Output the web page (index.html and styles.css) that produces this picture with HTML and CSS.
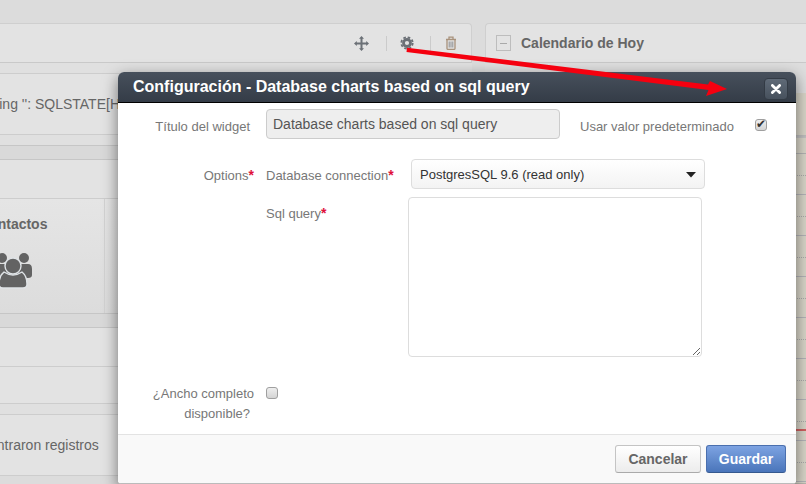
FILE: index.html
```html
<!DOCTYPE html>
<html lang="es">
<head>
<meta charset="utf-8">
<title>Configuración</title>
<link rel="stylesheet" href="styles.css">
</head>
<body>
<div class="page">
  <main class="col-left">
    <header class="widget-head">
      <span class="tool">
        <svg width="15" height="15" viewBox="0 0 15 15"><path class="ico" d="M7.5 0 10 2.8H8.5V6.5H12.2V5L15 7.5 12.2 10V8.5H8.5V12.2H10L7.5 15 5 12.2H6.5V8.5H2.8V10L0 7.5 2.8 5V6.5H6.5V2.8H5Z"/></svg>
      </span>
      <span class="tool sep gear-tool">
        <svg width="14" height="14" viewBox="0 0 14 14"><circle cx="7" cy="7" r="3.5" fill="none" stroke="#6b7076" stroke-width="2.8"/><circle cx="7" cy="7" r="5.7" fill="none" stroke="#6b7076" stroke-width="1.8" stroke-dasharray="2.6 1.88"/></svg>
      </span>
      <span class="tool sep">
        <svg width="12" height="14" viewBox="0 0 12 14"><path d="M1 3.5H11M4 3.2V1.2H8V3.2M2 3.5V12.4Q2 13.4 3 13.4H9Q10 13.4 10 12.4V3.5" fill="none" stroke="#a8927c" stroke-width="1.3"/><path d="M4.2 5.5V11.5M6 5.5V11.5M7.8 5.5V11.5" stroke="#8d8f92" stroke-width="1"/></svg>
      </span>
    </header>
    <div class="gap-10"></div>
    <section class="row row-alert"><span class="row-text alert-text">Error executing '': SQLSTATE[HY000]</span></section>
    <div class="gap-10"></div>
    <div class="band band-a"></div>
    <div class="row row-38"></div>
    <section class="cards">
      <article class="card">
        <h3 class="card-title">Contactos</h3>
        <svg class="users" width="48" height="38" viewBox="0 0 48 38">
          <circle cx="13" cy="7" r="5" class="fig"/><circle cx="35" cy="7" r="5" class="fig"/>
          <path class="fig" d="M5 18Q5 13 9 13H39Q43 13 43 18V24Q43 27 39 27H9Q5 27 5 24Z"/>
          <circle cx="24" cy="15" r="8" class="fig halo"/>
          <path class="fig halo" d="M15 21Q24 27 33 21 38 25 38 33 38 37 34 37H14Q10 37 10 33 10 25 15 21Z"/>
        </svg>
      </article>
      <div class="card-next"></div>
    </section>
    <div class="band band-b"></div>
    <div class="row row-40"></div>
    <div class="row row-37"></div>
    <div class="gap-10"></div>
    <section class="row row-empty"><span class="row-text empty-text">No se encontraron registros</span></section>
  </main>

  <aside class="col-right">
    <header class="cal-head">
      <span class="collapse"></span>
      <h2 class="cal-title">Calendario de Hoy</h2>
    </header>
    <div class="cal-top"></div>
    <div class="cal-grid">
      <div class="cal-allday"></div>
      <div class="slot"></div><div class="slot"></div><div class="slot"></div><div class="slot"></div>
      <div class="slot"></div><div class="slot"></div><div class="slot"></div><div class="slot"></div>
      <div class="now"></div>
    </div>
  </aside>
</div>

<div class="modal">
  <div class="modal-head">
    <h1 class="modal-title">Configuración - Database charts based on sql query</h1>
    <button class="close" type="button" aria-label="Cerrar">
      <svg width="10" height="10" viewBox="0 0 10 10"><path d="M1.4 1.4 8.6 8.6M8.6 1.4 1.4 8.6" stroke="#fff" stroke-width="2.8" stroke-linecap="round"/></svg>
    </button>
  </div>
  <form class="modal-body">
    <div class="form-row first">
      <label class="lab pad">Título del widget</label>
      <input class="text-input" type="text" value="Database charts based on sql query" readonly>
      <span class="default-label">Usar valor predeterminado</span>
      <input class="check check-default" type="checkbox" checked>
    </div>
    <div class="form-row options">
      <label class="lab">Options<b class="req">*</b></label>
      <div class="opt-grid">
        <label class="sub-lab">Database connection<b class="req">*</b></label>
        <div class="select-wrap">
          <select class="select"><option>PostgresSQL 9.6 (read only)</option></select>
          <svg class="caret" width="10" height="6" viewBox="0 0 10 6"><path d="M0 0H10L5 5.5Z" fill="#222"/></svg>
        </div>
        <label class="sub-lab sql">Sql query<b class="req">*</b></label>
        <textarea class="query"></textarea>
      </div>
    </div>
    <div class="form-row full">
      <label class="lab pad-wrap">¿Ancho completo<br><span class="pad">disponible?</span></label>
      <input class="check" type="checkbox">
    </div>
  </form>
  <div class="modal-foot">
    <button class="btn btn-cancel" type="button">Cancelar</button>
    <button class="btn btn-save" type="button">Guardar</button>
  </div>
</div>

<svg class="arrow" width="806" height="484" viewBox="0 0 806 484"><path d="M407 47.8 708 84.5 710 81 727 89 706 96 708.5 90 406.5 52Z" fill="#f5000f"/></svg>
</body>
</html>
```

FILE: styles.css
```css
* { box-sizing: border-box; }
html, body { margin: 0; height: 100%; }
body {
  width: 806px;
  height: 484px;
  overflow: hidden;
  position: relative;
  background: #dcdcdc;
  font-family: "Liberation Sans", Arial, sans-serif;
  color: #666;
}
.page { display: flex; gap: 13px; padding-top: 23px; height: 484px; }

/* left column: runs past the left edge of the window */
.col-left { width: 572px; margin-left: -100px; flex: none; }
.widget-head {
  height: 40px;
  display: flex;
  justify-content: flex-end;
  align-items: center;
  padding-right: 14px;
  background: #e3e3e3;
  border: 1px solid #cfcfcf;
  border-bottom-color: #c9c9c9;
  border-radius: 0 4px 0 0;
}
.tool { display: flex; align-items: center; height: 15px; }
.tool.sep { margin-left: 17px; padding-left: 14px; border-left: 1px solid #cbcbcb; }
.tool.sep:last-child { padding-left: 14px; margin-left: 15px; }
.tool.gear-tool { padding-left: 13px; padding-right: 1px; }
.ico { fill: #6b7076; }
.gap-10 { height: 10px; background: #e0e0e0; }
.row { background: #e3e3e3; border-top: 1px solid #cdcdcd; border-bottom: 1px solid #cdcdcd; display: flex; align-items: center; }
.row-alert { height: 62px; align-items: flex-start; padding-top: 20px; }
.row-text { font-size: 14px; white-space: nowrap; color: #666; line-height: 20px; }
.alert-text { margin-left: 23px; }
.band { background: #d9d9d9; }
.band-a { height: 15px; border-top: 1px solid #c6c6c6; border-bottom: 1px solid #c6c6c6; }
.row-38 { height: 38px; border-top: 0; border-bottom: 0; }
.cards { height: 116px; display: flex; border-top: 1px solid #cdcdcd; border-bottom: 1px solid #c6c6c6; }
.card {
  width: 205px;
  padding: 17px 0 0 79px;
  background: linear-gradient(#e5e5e5, #dcdcdc);
  border-right: 1px solid #d2d2d2;
}
.card-title { margin: 0 0 18px; font-size: 14px; line-height: 17px; font-weight: 700; color: #666; }
.users { display: block; margin-left: 10px; margin-top: 0; }
.fig { fill: #636363; }
.halo { stroke: #dfe3e6; stroke-width: 1.4; }
.card-next { flex: 1; background: linear-gradient(#e5e5e5, #dcdcdc); }
.band-b { height: 13px; }
.row-40 { height: 39px; border-bottom: 0; border-top: 1px solid #c6c6c6; }
.row-37 { height: 38px; border-bottom: 1px solid #cdcdcd; }
.row-empty { height: 62px; }
.empty-text { margin-left: 26px; }

/* right column */
.col-right { flex: 1; min-width: 0; }
.cal-head {
  height: 40px;
  display: flex;
  align-items: center;
  gap: 10px;
  padding-left: 10px;
  background: #e3e3e3;
  border: 1px solid #cfcfcf;
  border-bottom-color: #c9c9c9;
  border-right: 0;
  border-radius: 4px 0 0 0;
}
.collapse {
  width: 15px;
  height: 16px;
  border: 1px solid #bdbdbd;
  background: linear-gradient(#e3e3e3 7px, #a9a9a9 7px, #a9a9a9 8px, #e3e3e3 8px) center / 7px 14px no-repeat;
}
.cal-title { margin: 0; font-size: 14px; line-height: 17px; font-weight: 700; color: #666; }
.cal-top { height: 30px; background: #dedede; }
.cal-grid { position: relative; height: 391px; background: #d9d6c9; border-bottom: 1px solid #b9b9b0; }
.cal-allday { height: 61px; background: linear-gradient(#d9d6c9 42px, #bdbdbd 42px, #c4c4c4 45px, #d9d6c9 45px); border-bottom: 1px solid #b4b4b4; }
.slot { height: 41px; border-bottom: 1px solid #b4b4b8; }
.slot::before { content: ""; display: block; height: 21px; border-bottom: 1px dotted #ababab; }
.now { position: absolute; left: 0; right: 0; top: 336px; height: 2px; background: #d0605f; }

/* modal */
.modal {
  position: absolute;
  left: 118px;
  top: 72px;
  width: 678px;
  height: 412px;
  display: flex;
  flex-direction: column;
  background: #fff;
  border-bottom: 1px solid #bbb;
  border-radius: 6px 6px 3px 3px;
  box-shadow: 0 5px 15px rgba(0, 0, 0, .5);
}
.modal-head {
  height: 31px;
  flex: none;
  display: flex;
  align-items: center;
  justify-content: space-between;
  padding: 0 8px 0 15px;
  background: linear-gradient(#47505c, #343c47);
  border-bottom: 1px solid #000;
  border-radius: 6px 6px 0 0;
}
.modal-title { margin: 0; font-size: 16px; line-height: 30px; font-weight: 700; color: #fff; }
.close {
  width: 24px;
  height: 22px;
  margin-top: 3px;
  padding: 0;
  display: flex;
  align-items: center;
  justify-content: center;
  background: linear-gradient(#5f6a77, #47515d);
  border: 1px solid #333b45;
  border-radius: 4px;
}
.modal-body { flex: 1; padding-top: 6px; font-size: 13px; }
.form-row { display: flex; align-items: flex-start; }
.lab {
  width: 136px;
  flex: none;
  text-align: right;
  color: #777;
  line-height: 20px;
  margin-right: 12px;
}
.lab.pad, .lab .pad { padding-right: 4px; }
.first .lab { padding-top: 8px; }
.req { color: #e0103a; font-weight: 700; font-size: 14px; line-height: 14px; }
.text-input {
  width: 294px;
  height: 30px;
  padding: 0 6px;
  font: 14px "Liberation Sans", Arial, sans-serif;
  color: #555;
  background: #eee;
  border: 1px solid #ccc;
  border-radius: 4px;
  outline: 0;
}
.default-label { margin-left: 20px; margin-right: 21px; color: #777; line-height: 20px; padding-top: 8px; }
.check {
  appearance: none;
  -webkit-appearance: none;
  width: 12px;
  height: 12px;
  margin: 0;
  position: relative;
  background: linear-gradient(#eee, #d4d4d4);
  border: 1px solid #9f9f9f;
  border-radius: 3px;
}
.check-default { margin-top: 10px; }
.check:checked::before {
  content: "✔";
  position: absolute;
  left: 0;
  top: -2px;
  font: 12px/13px "DejaVu Sans", sans-serif;
  color: #333;
}
.options { margin-top: 20px; }
.options .lab { padding-top: 7px; }
.opt-grid { display: grid; grid-template-columns: 142px 297px; row-gap: 8px; }
.sub-lab { color: #777; line-height: 20px; padding-top: 7px; white-space: nowrap; }
.sub-lab.sql { padding-top: 7px; }
.select-wrap { position: relative; margin-left: 3px; width: 294px; height: 30px; }
.select {
  appearance: none;
  -webkit-appearance: none;
  width: 100%;
  height: 100%;
  padding: 0 8px;
  font: 13px "Liberation Sans", Arial, sans-serif;
  color: #333;
  background: linear-gradient(#fff, #f3f3f3);
  border: 1px solid #ddd;
  border-radius: 4px;
  outline: 0;
}
.caret { position: absolute; right: 9px; top: 13px; }
.query {
  display: block;
  width: 294px;
  height: 160px;
  margin: 0;
  background: #fff;
  border: 1px solid #ddd;
  border-radius: 4px;
  outline: 0;
}
.full { margin-top: 26px; }
.full .lab { padding-top: 1px; }
.full .check { margin-top: 4px; }
.modal-foot {
  height: 49px;
  flex: none;
  display: flex;
  justify-content: flex-end;
  gap: 5px;
  padding: 10px 10px 0 0;
  background: #f9f9f9;
  border-top: 1px solid #e3e3e3;
  border-radius: 0 0 3px 3px;
}
.btn {
  height: 28px;
  padding: 0;
  font: 700 14px "Liberation Sans", Arial, sans-serif;
  border-radius: 3px;
}
.btn-cancel {
  width: 86px;
  color: #666;
  background: linear-gradient(#fff, #ececec);
  border: 1px solid #c4c4c4;
  border-bottom-color: #aaa;
}
.btn-save {
  width: 80px;
  color: #fff;
  background: linear-gradient(#7da3e2, #4a75ba);
  border: 1px solid #4a6fae;
  border-bottom-color: #36598f;
}
.arrow { position: absolute; left: 0; top: 0; pointer-events: none; }
```
